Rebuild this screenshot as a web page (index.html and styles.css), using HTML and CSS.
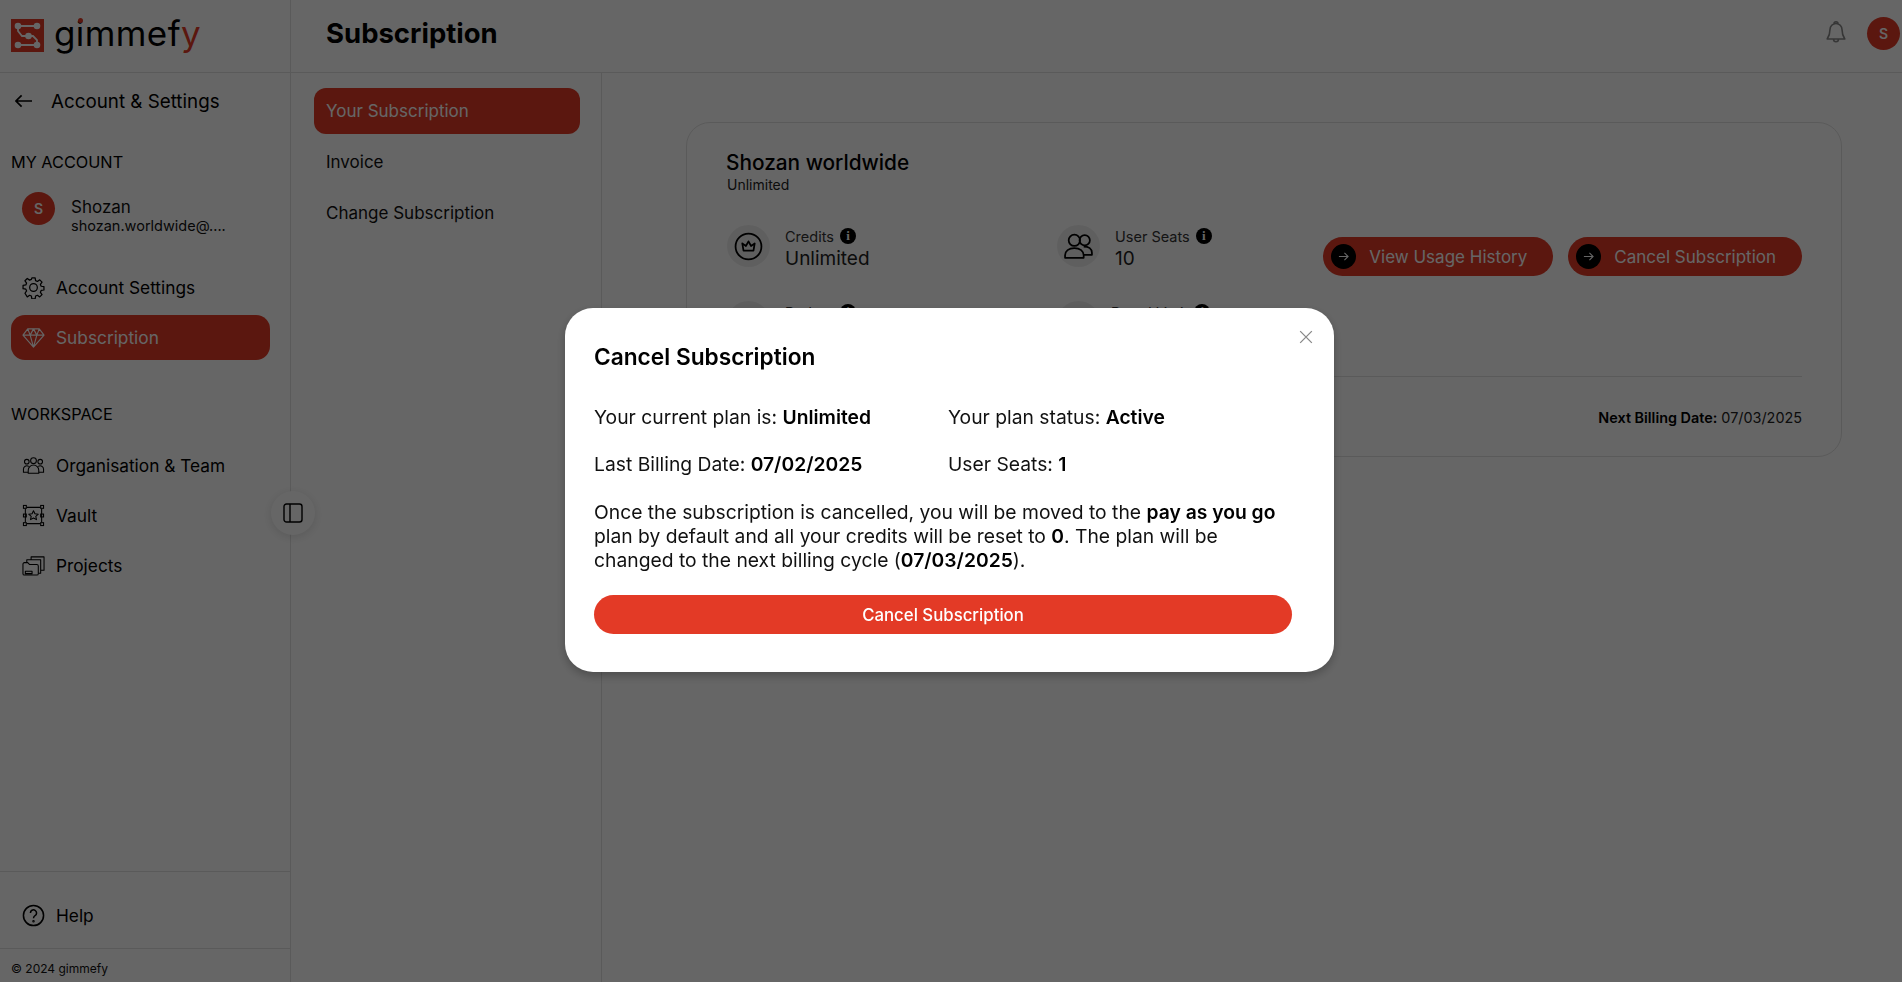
FILE: index.html
```html
<!DOCTYPE html>
<html lang="en">
  <head>
    <meta charset="UTF-8" />
    <meta name="viewport" content="width=device-width, initial-scale=1.0" />
    <title>gimmefy - Subscription</title>
    <link rel="stylesheet" href="styles.css">
  </head>
  <body>
    <div class="app">
      <!-- Left sidebar -->
      <aside class="sidebar">
        <div class="logo">
          <svg class="logo-mark" viewBox="0 0 33 33">
            <rect width="33" height="33" fill="#e33a26" />
            <g fill="none" stroke="#fff" stroke-width="1.800">
              <path d="M7 7H26M7 7v5l4 5h11l4 4v5H7" />
            </g>
            <g fill="#fff">
              <circle cx="7" cy="7" r="3.300" />
              <circle cx="26" cy="7" r="3.300" />
              <circle cx="17.500" cy="17" r="3.300" />
              <circle cx="7" cy="26" r="3.300" />
              <circle cx="26" cy="26" r="3.300" />
            </g>
          </svg>
          <span class="logo-text">gimmef<span class="logo-y">y</span><span class="logo-dot"></span></span>
        </div>

        <div class="back-row">
          <svg class="back-arrow" viewBox="0 0 18 14" fill="none" stroke="#000" stroke-width="1.800">
            <path d="M18 7H1M7 1 1 7l6 6" />
          </svg>
          <span>Account &amp; Settings</span>
        </div>

        <div class="side-heading">MY ACCOUNT</div>
        <div class="user">
          <div class="avatar">S</div>
          <div class="user-info">
            <div class="user-name">Shozan</div>
            <div class="user-mail">shozan.worldwide@....</div>
          </div>
        </div>

        <nav class="side-nav">
          <a class="side-link">
            <svg viewBox="0 0 24 24" fill="none" stroke="currentColor" stroke-width="1.300">
              <path d="M10.300 2h3.400l.5 2.900 1.900.8 2.400-1.700 2.400 2.400-1.700 2.400.8 1.900 2.900.5v3.400l-2.900.5-.8 1.900 1.700 2.400-2.400 2.400-2.400-1.700-1.900.8-.5 2.900h-3.400l-.5-2.900-1.900-.8-2.400 1.700L3.100 18l1.700-2.400-.8-1.900-2.900-.5v-3.400l2.900-.5.8-1.900L3.100 5l2.400-2.400 2.400 1.700 1.900-.8z" stroke-linejoin="round" />
              <circle cx="12" cy="12" r="4" />
            </svg>
            Account Settings
          </a>
          <a class="side-link active">
            <svg viewBox="0 0 24 24" fill="none" stroke="currentColor" stroke-width="1.200" stroke-linejoin="round">
              <path d="M6 3h12l5 6.500L12 22 1 9.500zM1 9.500h22M8.500 9.500 12 22l3.500-12.500M6 3l2.500 6.500L12 3l3.500 6.500L18 3" />
            </svg>
            Subscription
          </a>
        </nav>

        <div class="side-heading workspace">WORKSPACE</div>
        <nav class="side-nav">
          <a class="side-link">
            <svg viewBox="0 0 24 24" fill="none" stroke="currentColor" stroke-width="1.100">
              <circle cx="12" cy="7" r="3" />
              <circle cx="5" cy="8" r="2.400" />
              <circle cx="19" cy="8" r="2.400" />
              <path d="M6.500 20v-3a5.500 5.500 0 0 1 11 0v3zM6.500 19H1.500v-3a3.500 3.500 0 0 1 5.500-3M17.500 19h5v-3a3.500 3.500 0 0 0-5.500-3" />
            </svg>
            Organisation &amp; Team
          </a>
          <a class="side-link">
            <svg viewBox="0 0 24 24" fill="none" stroke="currentColor" stroke-width="1.100">
              <path d="M5 3.500h14M5 20.500h14M3.500 5v14M20.500 5v14" />
              <rect x="1.500" y="1.500" width="3" height="3" />
              <rect x="19.500" y="1.500" width="3" height="3" />
              <rect x="1.500" y="19.500" width="3" height="3" />
              <rect x="19.500" y="19.500" width="3" height="3" />
              <rect x="1.500" y="10.500" width="3" height="3" />
              <rect x="19.500" y="10.500" width="3" height="3" />
              <path d="m12 7 1.500 3.200 3.500.4-2.600 2.300.7 3.400-3.100-1.700-3.100 1.700.7-3.400L7 10.600l3.500-.4z" stroke-linejoin="round" />
            </svg>
            Vault
          </a>
          <a class="side-link">
            <svg viewBox="0 0 24 24" fill="none" stroke="currentColor" stroke-width="1.100" stroke-linejoin="round">
              <path d="M1 10.500A1.500 1.500 0 0 1 2.500 9H6l2 2h7.500a1.500 1.500 0 0 1 1.500 1.500v8a1.500 1.500 0 0 1-1.500 1.500h-13A1.500 1.500 0 0 1 1 20.500zM3.500 18h7v2.500h-7z" />
              <path d="M5 9V6h14.500v14H17M9.500 6V3H23v14h-3.500" />
            </svg>
            Projects
          </a>
        </nav>

        <div class="side-help">
          <a class="side-link">
            <svg viewBox="0 0 24 24" fill="none" stroke="currentColor" stroke-width="1.600">
              <circle cx="12" cy="12" r="10.500" />
              <path d="M8.800 9.300a3.200 3.200 0 1 1 4.800 2.800c-1 .6-1.600 1.300-1.600 2.700" />
              <circle cx="12" cy="18" r=".5" />
            </svg>
            Help
          </a>
        </div>
        <div class="copyright">© 2024 gimmefy</div>

        <button class="collapse-btn">
          <svg viewBox="0 0 20 20" fill="none" stroke="#000" stroke-width="1.400">
            <rect x="1" y="1" width="18" height="18" rx="2.500" />
            <path d="M7 1v18" />
          </svg>
        </button>
      </aside>

      <div class="main">
        <header class="topbar">
          <h1>Subscription</h1>
          <div class="topbar-right">
            <svg class="bell" viewBox="0 0 20 24" fill="none" stroke="#888" stroke-width="1.600" stroke-linejoin="round">
              <path d="M10 2.500a6 6 0 0 1 6 6c0 5 1.200 7 2.800 9.500H1.200C2.800 15.500 4 13.500 4 8.500a6 6 0 0 1 6-6zM8 2.800a2 2 0 0 1 4 0M7.500 18a2.500 2.800 0 0 0 5 0" />
            </svg>
            <div class="avatar">S</div>
          </div>
        </header>

        <div class="body">
          <nav class="sub-nav">
            <a class="sub-link active">Your Subscription</a>
            <a class="sub-link">Invoice</a>
            <a class="sub-link">Change Subscription</a>
          </nav>

          <section class="content">
            <div class="card">
              <div class="card-title">Shozan worldwide</div>
              <div class="card-plan">Unlimited</div>

              <div class="card-mid">
                <div class="stats">
                  <div class="stat">
                    <div class="stat-icon">
                      <svg viewBox="0 0 28 28" fill="none" stroke="#000" stroke-width="1.700" stroke-linejoin="round">
                        <circle cx="14" cy="14" r="12.500" />
                        <path d="M8 11l3.500 2.500L14 9l2.500 4.500L20 11l-1.200 7H9.200z" />
                      </svg>
                    </div>
                    <div>
                      <div class="stat-label">Credits <span class="info">i</span></div>
                      <div class="stat-value">Unlimited</div>
                    </div>
                  </div>
                  <div class="stat">
                    <div class="stat-icon">
                      <svg class="wide" viewBox="0 0 30 26" fill="none" stroke="#000" stroke-width="1.700" stroke-linejoin="round">
                        <circle cx="11" cy="7" r="5.500" />
                        <circle cx="21" cy="7" r="5" />
                        <path d="M2 24v-2.500c0-4 3.500-7 9-7s9 3 9 7V24zM20 21h8v-2c0-3.500-3-6-8-6" />
                      </svg>
                    </div>
                    <div>
                      <div class="stat-label">User Seats <span class="info">i</span></div>
                      <div class="stat-value">10</div>
                    </div>
                  </div>
                  <div class="stat">
                    <div class="stat-icon"></div>
                    <div>
                      <div class="stat-label">Budget <span class="info">i</span></div>
                    </div>
                  </div>
                  <div class="stat stat-shifted">
                    <div class="stat-icon"></div>
                    <div>
                      <div class="stat-label">Brand Limit <span class="info">i</span></div>
                    </div>
                  </div>
                </div>
                <div class="card-actions">
                  <a class="pill-btn">
                    <span class="pill-dot"><svg viewBox="0 0 12 12" fill="none" stroke="#fff" stroke-width="1.200"><path d="M1 6h10M7 2l4 4-4 4" /></svg></span>
                    View Usage History
                  </a>
                  <a class="pill-btn">
                    <span class="pill-dot"><svg viewBox="0 0 12 12" fill="none" stroke="#fff" stroke-width="1.200"><path d="M1 6h10M7 2l4 4-4 4" /></svg></span>
                    Cancel Subscription
                  </a>
                </div>
              </div>

              <div class="card-foot"><b>Next Billing Date:</b> 07/03/2025</div>
            </div>
          </section>
        </div>
      </div>
    </div>

    <!-- Cancel subscription modal -->
    <div class="modal-overlay">
      <div class="modal">
        <button class="modal-close">
          <svg viewBox="0 0 12 12" fill="none" stroke="#888" stroke-width="1.100"><path d="M1 1l10 10M11 1 1 11" /></svg>
        </button>
        <h2>Cancel Subscription</h2>
        <div class="modal-grid">
          <div>Your current plan is: <b>Unlimited</b></div>
          <div>Your plan status: <b>Active</b></div>
          <div>Last Billing Date: <b>07/02/2025</b></div>
          <div>User Seats: <b>1</b></div>
        </div>
        <p>
          Once the subscription is cancelled, you will be moved to the
          <b>pay as you go</b> plan by default and all your credits will be
          reset to <b>0</b>. The plan will be changed to the next billing cycle
          (<b>07/03/2025</b>).
        </p>
        <button class="modal-btn">Cancel Subscription</button>
      </div>
    </div>
  </body>
</html>
```

FILE: styles.css
```css
:root {
  --red: #e33a26;
  --border: #e2e2e2;
  --text: #111;
}
* {
  box-sizing: border-box;
}
html,
body {
  height: 100%;
}
body {
  margin: 0;
  font-family: Inter, "Noto Sans", sans-serif;
  color: var(--text);
  background: #fff;
  overflow: hidden;
}
.app {
  display: flex;
  height: 982px;
}

/* Sidebar */
.sidebar {
  position: relative;
  width: 291px;
  flex: none;
  display: flex;
  flex-direction: column;
  border-right: 1px solid var(--border);
}
.logo {
  height: 73px;
  flex: none;
  display: flex;
  align-items: center;
  gap: 10px;
  padding: 0 11px 1px;
  border-bottom: 1px solid var(--border);
}
.logo-mark {
  width: 33px;
  height: 33px;
}
.logo-text {
  position: relative;
  font-size: 35px;
  line-height: 40px;
  margin-top: -6px;
  color: #000;
  letter-spacing: 0.4px;
}
.logo-y {
  color: var(--red);
}
.logo-dot {
  position: absolute;
  top: 5px;
  left: 24px;
  width: 5px;
  height: 5px;
  border-radius: 50%;
  background: var(--red);
}
.back-row {
  display: flex;
  align-items: center;
  gap: 19px;
  padding: 13px 15px 0;
  height: 43px;
  font-size: 18.800px;
  color: #000;
}
.back-arrow {
  width: 17px;
  height: 14px;
}
.side-heading {
  margin: 36px 11px 0;
  font-size: 16.300px;
  line-height: 20px;
  color: #000;
}
.side-heading.workspace {
  margin-top: 44px;
}
.user {
  display: flex;
  gap: 16px;
  padding: 20px 22px 0;
}
.avatar {
  width: 33px;
  height: 33px;
  border-radius: 50%;
  background: var(--red);
  color: #fff;
  display: flex;
  align-items: center;
  justify-content: center;
  font-size: 14px;
  font-weight: 600;
  flex: none;
}
.user-name {
  margin-top: 5px;
  font-size: 17px;
  line-height: 21px;
}
.user-mail {
  margin-top: -1px;
  font-size: 14.500px;
  line-height: 18px;
}
.side-nav {
  display: flex;
  flex-direction: column;
  margin-top: 16px;
}
.side-nav:first-of-type {
  margin-top: 27px;
}
.side-link {
  display: flex;
  align-items: center;
  gap: 11px;
  height: 50px;
  margin: 0 20px 0 11px;
  padding: 0 11px;
  border-radius: 14px;
  font-size: 17.300px;
  color: #000;
}
.side-link svg {
  width: 23px;
  height: 23px;
  flex: none;
}
.side-link.active {
  height: 45px;
  margin-top: 3px;
  background: var(--red);
  color: #fff;
}
.side-help {
  margin-top: auto;
  padding: 18px 0 9px;
  border-top: 1px solid var(--border);
  height: 77px;
}
.copyright {
  height: 34px;
  padding: 12px 11px 0;
  font-size: 12px;
  border-top: 1px solid var(--border);
}
.collapse-btn {
  position: absolute;
  top: 491px;
  left: 271px;
  width: 44px;
  height: 44px;
  padding: 0;
  border: none;
  border-radius: 50%;
  background: #fff;
  box-shadow: 0 2px 10px rgba(0, 0, 0, 0.12);
  display: flex;
  align-items: center;
  justify-content: center;
}
.collapse-btn svg {
  width: 20px;
  height: 20px;
}

/* Main column */
.main {
  flex: 1;
  display: flex;
  flex-direction: column;
  min-width: 0;
}
.topbar {
  height: 73px;
  flex: none;
  display: flex;
  align-items: center;
  justify-content: space-between;
  padding: 0 2px 6px 35px;
  border-bottom: 1px solid var(--border);
}
.topbar h1 {
  margin: 0;
  font-size: 27.500px;
  font-weight: 700;
  color: #000;
}
.topbar-right {
  display: flex;
  align-items: center;
  gap: 21px;
}
.bell {
  width: 20px;
  height: 24px;
}
.body {
  flex: 1;
  display: flex;
}
.sub-nav {
  width: 311px;
  flex: none;
  padding: 15px 21px 0 23px;
  display: flex;
  flex-direction: column;
  gap: 5px;
  border-right: 1px solid var(--border);
}
.sub-link {
  height: 46px;
  padding: 0 12px;
  display: flex;
  align-items: center;
  border-radius: 12px;
  font-size: 17px;
  color: #111;
}
.sub-link.active {
  background: var(--red);
  color: #fff;
}
.content {
  flex: 1;
  padding: 49px 60px 0 84px;
}
.card {
  height: 335px;
  padding: 27px 39px 0;
  border: 1px solid var(--border);
  border-radius: 24px;
}
.card-title {
  font-size: 20.800px;
  line-height: 26px;
  font-weight: 500;
  color: #000;
}
.card-plan {
  margin-left: 1px;
  font-size: 14px;
  line-height: 18px;
  color: #222;
}
.card-mid {
  display: flex;
  justify-content: space-between;
  height: 152px;
  margin-top: 31px;
  padding-left: 1px;
  border-bottom: 1px solid var(--border);
}
.stats {
  display: grid;
  grid-template-columns: 330px 260px;
  grid-auto-rows: 42px;
  row-gap: 34px;
}
.stat {
  display: flex;
  gap: 15px;
  align-items: flex-start;
}
.stat-icon {
  width: 43px;
  height: 42px;
  border-radius: 50%;
  background: #eee;
  display: flex;
  align-items: center;
  justify-content: center;
  flex: none;
}
.stat-icon svg {
  width: 29px;
  height: 29px;
}
.stat-icon svg.wide {
  width: 31px;
  height: 27px;
}
.stat-label {
  margin-top: 3px;
  font-size: 14.500px;
  line-height: 18px;
  color: #333;
}
.stat-shifted {
  margin-left: -4px;
}
.stat-shifted .stat-icon {
  margin-left: 4px;
}
.stat-shifted .stat-label {
  margin-left: -4px;
}
.info {
  display: inline-block;
  width: 16px;
  height: 16px;
  margin-left: 2px;
  border-radius: 50%;
  background: #000;
  color: #fff;
  font-family: "Liberation Serif", serif;
  font-size: 13px;
  font-weight: 700;
  line-height: 16px;
  text-align: center;
  vertical-align: 2px;
}
.stat-value {
  margin-top: 2px;
  font-size: 19px;
  line-height: 22px;
  color: #222;
}
.card-actions {
  display: flex;
  gap: 15px;
  height: 39px;
  margin-top: 12px;
}
.pill-btn {
  display: flex;
  align-items: center;
  gap: 13px;
  height: 39px;
  padding: 0 26px 0 8px;
  border-radius: 20px;
  background: var(--red);
  color: #fff;
  font-size: 17px;
  white-space: nowrap;
}
.pill-dot {
  width: 25px;
  height: 25px;
  border-radius: 50%;
  background: #000;
  display: flex;
  align-items: center;
  justify-content: center;
}
.pill-dot svg {
  width: 11px;
  height: 11px;
}
.card-foot {
  margin-top: 31px;
  font-size: 14.400px;
  line-height: 20px;
  text-align: right;
  color: #222;
}
.card-foot b {
  font-weight: 600;
  color: #000;
}

/* Modal Styles */
.modal-overlay {
  position: fixed;
  top: 0;
  left: 0;
  right: 0;
  bottom: 0;
  background: rgba(0, 0, 0, 0.6);
  z-index: 1000;
}
.modal {
  position: absolute;
  top: 308px;
  left: 565px;
  width: 769px;
  height: 364px;
  padding: 32px 41px 0 29px;
  background: #fff;
  border-radius: 28px;
  box-shadow: 0 4px 10px rgba(0, 0, 0, 0.25);
  font-size: 19.300px;
  line-height: 24px;
  color: #111;
}
.modal h2 {
  margin: 0 0 31px;
  font-size: 22.700px;
  line-height: 34px;
  font-weight: 600;
  color: #000;
}
.modal b {
  font-weight: 600;
  color: #000;
}
.modal-close {
  position: absolute;
  top: 22px;
  right: 21px;
  width: 14px;
  height: 14px;
  padding: 0;
  border: none;
  background: none;
}
.modal-close svg {
  display: block;
}
.modal-grid {
  display: grid;
  grid-template-columns: 354px 1fr;
  row-gap: 23px;
}
.modal p {
  margin: 24px 0 0;
}
.modal-btn {
  display: block;
  width: 698px;
  height: 39px;
  margin-top: 23px;
  border: none;
  border-radius: 20px;
  background: var(--red);
  color: #fff;
  font-family: inherit;
  font-size: 16.800px;
  font-weight: 500;
}
```
